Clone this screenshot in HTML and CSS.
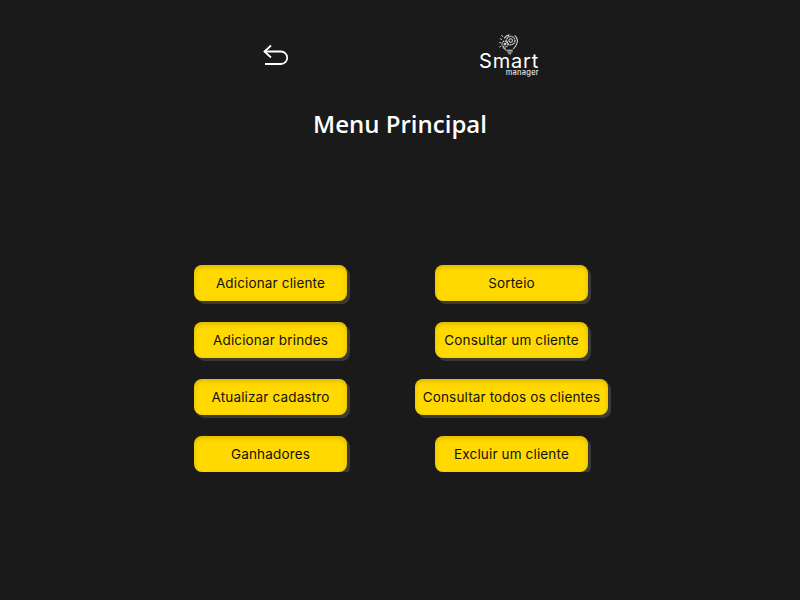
FILE: index.html
```html
<!DOCTYPE html>
<html lang="pt-BR">
<head>
  <meta charset="UTF-8">
  <title>Menu Principal</title>
  <link rel="stylesheet" href="styles.css">
</head>
<body>
  <header class="top-bar">
    <a class="back" href="#">
      <svg width="26" height="22" viewBox="0 0 26 22" fill="none" stroke="#fff" stroke-width="1.8">
        <path d="M8 1.5 L1.5 7.5 L8 13.5"/>
        <path d="M1.5 7.5 H18 A6 6 0 0 1 18 20 H2"/>
      </svg>
    </a>
    <div class="logo">
      <svg class="logo-icon" width="21" height="21" viewBox="0 0 24 24" fill="none" stroke="#d8d8d8" stroke-width="1.2">
        <circle cx="14.5" cy="7.5" r="4.8" stroke-width="1.6" stroke-dasharray="1.6 .8"/>
        <circle cx="14.5" cy="7.5" r="2"/>
        <circle cx="8" cy="11.5" r="3.4" stroke-width="1.5" stroke-dasharray="1.4 .8"/>
        <circle cx="8" cy="11.5" r="1"/>
        <path d="M7 5 a8.5 8.5 0 0 1 6 -4 M19 1.500 a8.5 8.5 0 0 1 3 8 q-1 4 -4.500 7.500 M5.500 15.500 q3 1.500 4 3.500"/>
        <path d="M10 18.500 h7 M10.500 20.500 h6 M12 22.500 h3"/>
        <path d="M2 5 l2.500 1.500 M1 10 h2.500 M4 1 l1.500 2.500 M1.500 15 l2 -1" stroke-width="1"/>
      </svg>
      <span class="logo-name">Smart</span>
      <span class="logo-sub">manager</span>
    </div>
  </header>

  <h1 class="title">Menu Principal</h1>

  <main class="menu">
    <button class="btn">Adicionar cliente</button>
    <button class="btn">Sorteio</button>
    <button class="btn">Adicionar brindes</button>
    <button class="btn">Consultar um cliente</button>
    <button class="btn">Atualizar cadastro</button>
    <button class="btn btn-wide">Consultar todos os clientes</button>
    <button class="btn">Ganhadores</button>
    <button class="btn">Excluir um cliente</button>
  </main>
</body>
</html>
```

FILE: styles.css
```css
body {
  margin: 0;
  background: #1a1a1a;
  color: #fff;
  font-family: 'Open Sans', sans-serif;
}
.top-bar {
  display: flex;
  align-items: flex-start;
  gap: 189px;
  padding: 33px 0 0 263px;
  height: 45px;
}
.back {
  display: block;
  margin-top: 11px;
  height: 22px;
}
.logo {
  display: flex;
  flex-direction: column;
  align-items: center;
  width: 62px;
  font-family: 'Inter', sans-serif;
  line-height: 1;
}
.logo-icon {
  display: block;
  margin: 1px 2px 0 0;
}
.logo-name {
  font-size: 20px;
  font-weight: 400;
  letter-spacing: 0.8px;
  height: 13px;
  line-height: 13px;
}
.logo-sub {
  align-self: flex-end;
  height: 6px;
  line-height: 6px;
  margin: 2px 1px 0 0;
  font-size: 7.5px;
  letter-spacing: 0.3px;
}
.title {
  margin: 29px 0 0;
  font-size: 24px;
  line-height: 33px;
  font-weight: 600;
  text-align: center;
}
.menu {
  display: grid;
  grid-template-columns: 193px 193px;
  column-gap: 48px;
  row-gap: 21px;
  justify-items: center;
  margin: 125px 0 0 174px;
}
.btn {
  width: 153px;
  height: 36px;
  padding: 0;
  border: none;
  border-radius: 8px;
  background: #ffd900;
  color: #111;
  font-family: 'Inter', sans-serif;
  font-size: 13.5px;
  font-weight: 400;
  letter-spacing: 0.15px;
  white-space: nowrap;
  box-shadow: 3px 3px 0 #3a3a36, inset 0 2px 4px rgba(170,130,0,0.4);
  cursor: pointer;
}
.btn-wide {
  width: 193px;
}
```
